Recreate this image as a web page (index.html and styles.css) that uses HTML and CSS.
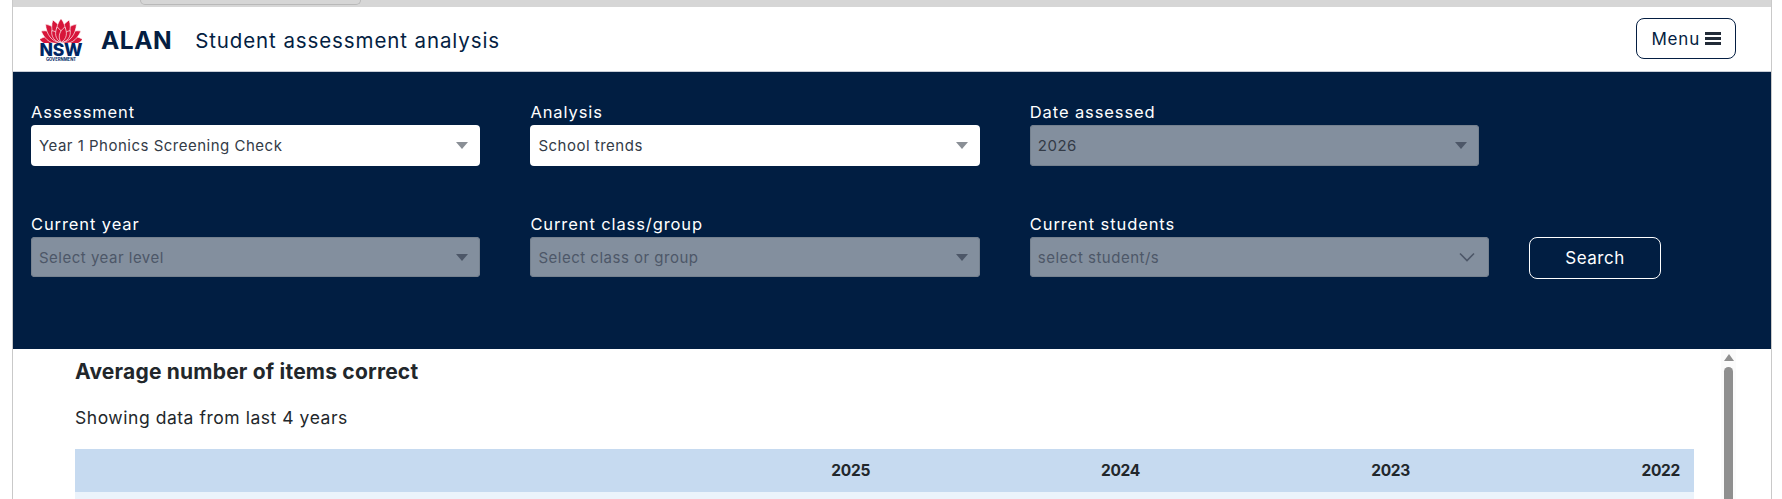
FILE: index.html
```html
<!DOCTYPE html>
<html lang="en">

<head>
    <meta charset="UTF-8">
    <meta name="viewport" content="width=device-width, initial-scale=1.0">
    <title>ALAN - Student assessment analysis</title>
    <link rel="stylesheet" href="styles.css">
</head>

<body>
    <div class="page">
        <div class="browser-strip">
            <div class="browser-tab"></div>
        </div>

        <header class="site-header">
            <div class="logo">
                <svg class="waratah" viewBox="0 0 42 24" width="42" height="24">
                    <g fill="#d7153a" stroke="#fff" stroke-width="0.6">
                        <path transform="translate(21 23.5) rotate(-82)" d="M0 0C-7-5-6-15 0-22C6-15 7-5 0 0Z" />
                        <path transform="translate(21 23.5) rotate(82)" d="M0 0C-7-5-6-15 0-22C6-15 7-5 0 0Z" />
                        <path transform="translate(21 23.5) rotate(-60)" d="M0 0C-7-6-6-15 0-23C6-15 7-6 0 0Z" />
                        <path transform="translate(21 23.5) rotate(60)" d="M0 0C-7-6-6-15 0-23C6-15 7-6 0 0Z" />
                        <path transform="translate(21 23.5) rotate(-40)" d="M0 0C-7-6-6-16 0-24C6-16 7-6 0 0Z" />
                        <path transform="translate(21 23.5) rotate(40)" d="M0 0C-7-6-6-16 0-24C6-16 7-6 0 0Z" />
                        <path transform="translate(21 23.5) rotate(-20)" d="M0 0C-6-7-6-16 0-24C6-16 6-7 0 0Z" />
                        <path transform="translate(21 23.5) rotate(20)" d="M0 0C-6-7-6-16 0-24C6-16 6-7 0 0Z" />
                        <path transform="translate(21 23.5)" d="M0 0C-6-7-6-16 0-24C6-16 6-7 0 0Z" />
                        <path transform="translate(21 23.5) rotate(-38)" d="M0 0C-5-5-4-11 0-15C4-11 5-5 0 0Z" />
                        <path transform="translate(21 23.5) rotate(38)" d="M0 0C-5-5-4-11 0-15C4-11 5-5 0 0Z" />
                        <path transform="translate(21 23.5) rotate(-14)" d="M0 0C-5-5-4-11 0-16C4-11 5-5 0 0Z" />
                        <path transform="translate(21 23.5) rotate(14)" d="M0 0C-5-5-4-11 0-16C4-11 5-5 0 0Z" />
                    </g>
                </svg>
                <span class="logo-nsw">NSW</span>
                <span class="logo-gov">GOVERNMENT</span>
            </div>
            <span class="app-name">ALAN</span>
            <span class="app-desc">Student assessment analysis</span>
            <button class="menu-btn">
                Menu
                <svg class="menu-icon" viewBox="0 0 16 14" width="16" height="14">
                    <rect x="0" y="0" width="16" height="3" fill="#222b38" />
                    <rect x="0" y="5" width="16" height="3" fill="#222b38" />
                    <rect x="0" y="10" width="16" height="3" fill="#222b38" />
                </svg>
            </button>
        </header>

        <section class="filters">
            <div class="filter-row">
                <div class="field">
                    <label>Assessment</label>
                    <div class="select">
                        <span>Year 1 Phonics Screening Check</span>
                        <i class="caret"></i>
                    </div>
                </div>
                <div class="field">
                    <label>Analysis</label>
                    <div class="select">
                        <span>School trends</span>
                        <i class="caret"></i>
                    </div>
                </div>
                <div class="field">
                    <label>Date assessed</label>
                    <div class="select disabled">
                        <span>2026</span>
                        <i class="caret"></i>
                    </div>
                </div>
            </div>
            <div class="filter-row second">
                <div class="field">
                    <label>Current year</label>
                    <div class="select disabled placeholder">
                        <span>Select year level</span>
                        <i class="caret"></i>
                    </div>
                </div>
                <div class="field">
                    <label>Current class/group</label>
                    <div class="select disabled placeholder">
                        <span>Select class or group</span>
                        <i class="caret"></i>
                    </div>
                </div>
                <div class="field wide">
                    <label>Current students</label>
                    <div class="select disabled placeholder">
                        <span>select student/s</span>
                        <svg class="chevron" viewBox="0 0 16 10" width="16" height="10">
                            <path d="M1 1.5L8 8.5L15 1.5" fill="none" stroke="#4d5768" stroke-width="1.6" />
                        </svg>
                    </div>
                </div>
                <button class="search-btn">Search</button>
            </div>
        </section>

        <section class="results">
            <div class="results-body">
                <h2>Average number of items correct</h2>
                <p>Showing data from last 4 years</p>
                <table>
                    <thead>
                        <tr>
                            <th class="name-col"></th>
                            <th>2025</th>
                            <th>2024</th>
                            <th>2023</th>
                            <th>2022</th>
                        </tr>
                    </thead>
                    <tbody>
                        <tr>
                            <td colspan="5"></td>
                        </tr>
                    </tbody>
                </table>
            </div>
            <div class="scrollbar">
                <i class="scroll-arrow"></i>
                <div class="scroll-thumb"></div>
            </div>
        </section>
    </div>
</body>

</html>
```

FILE: styles.css
```css
html,
body {
    height: 499px;
    overflow: hidden;
}

body {
    font-family: Inter, "Open Sans", Arial, sans-serif;
    margin: 0;
    padding: 0;
    background-color: #fff;
}

.page {
    display: flex;
    flex-direction: column;
    width: 1758px;
    height: 499px;
    margin-left: 12px;
    border-left: 1px solid #c9c9c9;
    border-right: 1px solid #c9c9c9;
    overflow: hidden;
}

.browser-strip {
    flex: none;
    height: 7px;
    background-color: #d6d6d6;
}

.browser-tab {
    width: 219px;
    height: 4px;
    margin-left: 127px;
    border: 1px solid #b9b9b9;
    border-top: none;
    border-radius: 0 0 6px 6px;
}

.site-header {
    flex: none;
    display: flex;
    align-items: center;
    height: 64px;
    padding-left: 27px;
    padding-right: 35px;
    border-bottom: 1px solid #c9ced6;
    background-color: #fff;
}

.logo {
    display: flex;
    flex-direction: column;
    align-items: center;
    width: 42px;
    margin-top: 2px;
}

.waratah {
    display: block;
}

.logo-nsw {
    font-size: 17.5px;
    line-height: 14px;
    font-weight: 800;
    letter-spacing: -0.2px;
    color: #002664;
}

.logo-gov {
    font-size: 4.2px;
    line-height: 5px;
    font-weight: 700;
    color: #002664;
}

.app-name {
    margin-left: 19px;
    margin-top: 1px;
    font-size: 24.5px;
    font-weight: 700;
    letter-spacing: 0.5px;
    color: #041e42;
}

.app-desc {
    margin-left: 23px;
    margin-top: 2px;
    font-size: 20.5px;
    letter-spacing: 0.9px;
    color: #041e42;
}

.menu-btn {
    display: flex;
    align-items: center;
    gap: 5px;
    height: 41px;
    margin-left: auto;
    margin-bottom: 1px;
    padding: 0 14px;
    font-family: inherit;
    font-size: 17px;
    letter-spacing: 0.8px;
    color: #041e42;
    background: #fff;
    border: 1px solid #041e42;
    border-radius: 8px;
}

.filters {
    flex: none;
    height: 277px;
    box-sizing: border-box;
    padding: 28px 0 0 18px;
    background-color: #011e42;
}

.filter-row {
    display: flex;
    align-items: flex-end;
    gap: 50px;
}

.filter-row.second {
    margin-top: 46px;
}

.field {
    width: 449.4px;
}

.field.wide {
    width: 459px;
}

.field label {
    display: block;
    height: 25px;
    font-size: 16.5px;
    line-height: 25px;
    letter-spacing: 0.9px;
    color: #fff;
}

.select {
    display: flex;
    align-items: center;
    justify-content: space-between;
    box-sizing: border-box;
    height: 41px;
    padding: 0 12px 0 8px;
    font-size: 15px;
    letter-spacing: 0.5px;
    color: #333b47;
    background-color: #fff;
    border-radius: 4px;
}

.second .select {
    height: 40px;
}

.select.disabled {
    color: #333b47;
    background-color: #838f9e;
    box-shadow: inset 0 0 0 1px #75818f;
}

.select.placeholder {
    color: #4d5768;
}

.caret {
    width: 0;
    height: 0;
    border-left: 6px solid transparent;
    border-right: 6px solid transparent;
    border-top: 7px solid #8a8f96;
}

.disabled .caret {
    border-top-color: #4d5768;
}

.chevron {
    margin-right: 2px;
}

.search-btn {
    width: 132px;
    height: 42px;
    margin-left: -9.8px;
    margin-bottom: -2px;
    font-family: inherit;
    font-size: 17px;
    letter-spacing: 0.5px;
    color: #fff;
    background: transparent;
    border: 1px solid #fff;
    border-radius: 8px;
}

.results {
    flex: 1;
    display: flex;
    background-color: #fff;
}

.results-body {
    width: 1619px;
    margin-left: 62px;
    padding-top: 11px;
}

.results-body h2 {
    margin: 0;
    font-size: 21px;
    line-height: 24px;
    font-weight: 700;
    letter-spacing: 0.2px;
    color: #22272b;
}

.results-body p {
    margin: 22px 0 19px;
    font-size: 17.5px;
    line-height: 24px;
    letter-spacing: 0.54px;
    color: #22272b;
}

.results-body table {
    width: 100%;
    border-collapse: collapse;
    table-layout: fixed;
}

.results-body th {
    width: 270px;
    height: 43px;
    box-sizing: border-box;
    padding: 0 14px 1px;
    font-size: 15.5px;
    font-weight: 700;
    letter-spacing: -0.3px;
    text-align: right;
    color: #22272b;
    background-color: #c6daf0;
}

.results-body th.name-col {
    width: 539px;
}

.results-body td {
    height: 30px;
    background-color: #ebf3fb;
}

.scrollbar {
    display: flex;
    flex-direction: column;
    align-items: center;
    width: 15px;
    margin-left: 27px;
    padding-top: 5px;
    background-color: #fbfbfb;
}

.scroll-arrow {
    flex: none;
    width: 0;
    height: 0;
    border-left: 5px solid transparent;
    border-right: 5px solid transparent;
    border-bottom: 7px solid #8f8f8f;
}

.scroll-thumb {
    flex: 1;
    width: 9px;
    margin-top: 6px;
    background-color: #8f8f8f;
    border-radius: 5px 5px 0 0;
}
```
